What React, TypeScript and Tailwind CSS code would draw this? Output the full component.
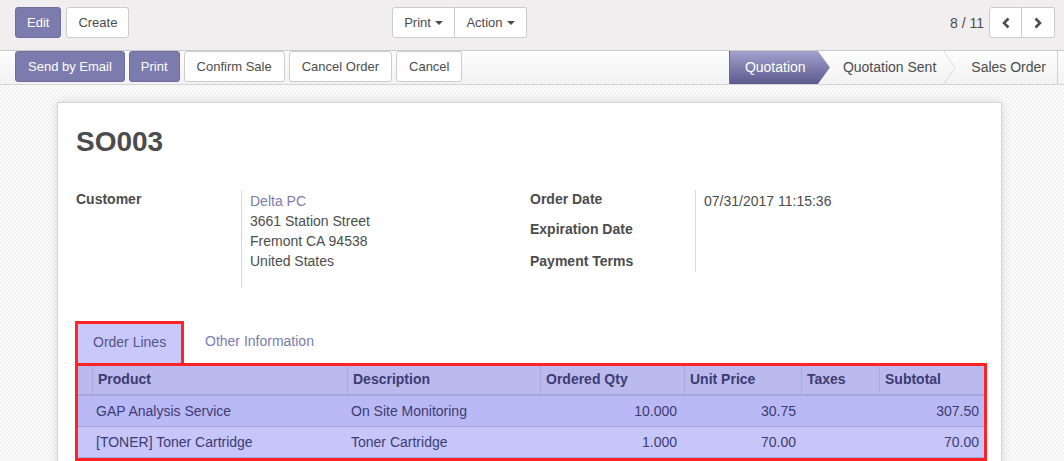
import React from "react";

const btnWhite =
  "h-[31px] px-[11px] border border-[#cccccc] bg-white rounded-[3px] text-[13px] text-[#4c4c4c] flex items-center";
const btnPrimary =
  "h-[31px] px-[11px] border border-[#6f6e9e] bg-[#7c7bad] rounded-[3px] text-[13px] text-white flex items-center";

function Caret() {
  return <span className="ml-[4px] inline-block w-0 h-0 border-l-[4px] border-r-[4px] border-t-[4px] border-l-transparent border-r-transparent border-t-[#4c4c4c]" />;
}

function ChevronL() {
  return (
    <svg width="10" height="12" viewBox="0 0 10 12">
      <path d="M7.5 1.5 L3 6 L7.5 10.5" fill="none" stroke="#4c4c4c" strokeWidth="2.6" />
    </svg>
  );
}
function ChevronR() {
  return (
    <svg width="10" height="12" viewBox="0 0 10 12">
      <path d="M2.5 1.5 L7 6 L2.5 10.5" fill="none" stroke="#4c4c4c" strokeWidth="2.6" />
    </svg>
  );
}

const rows = [
  { product: "GAP Analysis Service", desc: "On Site Monitoring", qty: "10.000", price: "30.75", taxes: "", subtotal: "307.50", bg: "bg-[#b9b9f6]" },
  { product: "[TONER] Toner Cartridge", desc: "Toner Cartridge", qty: "1.000", price: "70.00", taxes: "", subtotal: "70.00", bg: "bg-[#c6c6fb]" },
];

const cols = "grid grid-cols-[14px_255px_193px_144px_117px_78px_1fr]";

export default function App() {
  return (
    <div className="w-[1064px] h-[461px] overflow-hidden font-['Liberation_Sans',Arial,sans-serif] text-[#4c4c4c] bg-[repeating-conic-gradient(#f3f3f3_0_25%,#fbfbfb_0_50%)] bg-[length:4px_4px]">
      {/* control panel */}
      <div className="h-[51px] bg-[#f0eeee] border-b border-[#c9c9c9] flex items-start pt-[7px] pl-[15px] pr-[9px]">
        <div className="w-[512px] flex justify-between">
          <div className="flex gap-[5px]">
            <button className={btnPrimary}>Edit</button>
            <button className={btnWhite}>Create</button>
          </div>
          <div className="flex">
            <button className={btnWhite + " rounded-r-none w-[63px] justify-center"}>
              Print<Caret />
            </button>
            <button className={btnWhite + " rounded-l-none border-l-0 w-[72px] justify-center"}>
              Action<Caret />
            </button>
          </div>
        </div>
        <div className="ml-auto flex items-center">
          <span className="text-[14px] mr-[5px] mt-[1px]">8 / 11</span>
          <div className="flex">
            <button className="h-[31px] w-[33px] border border-[#cccccc] bg-white rounded-l-[3px] flex items-center justify-center">
              <ChevronL />
            </button>
            <button className="h-[31px] w-[33px] border border-l-0 border-[#cccccc] bg-white rounded-r-[3px] flex items-center justify-center">
              <ChevronR />
            </button>
          </div>
        </div>
      </div>
      {/* statusbar */}
      <div className="h-[34px] bg-[linear-gradient(#fdfdfd,#f2f2f2)] border-b border-[#d6d6d6] flex items-start pl-[15px] pr-[6px]">
        <div className="flex gap-[4px]">
          <button className={btnPrimary + " px-[12px]"}>Send by Email</button>
          <button className={btnPrimary}>Print</button>
          <button className={btnWhite + " px-[12px]"}>Confirm Sale</button>
          <button className={btnWhite + " px-[12px]"}>Cancel Order</button>
          <button className={btnWhite + " px-[12px]"}>Cancel</button>
        </div>
        <div className="ml-auto flex h-[33px] border-r border-[#d0d0d0] text-[14px]">
          <div className="relative h-full w-[101px] border-l border-[#6a6a98] bg-[linear-gradient(#a3a1cc,#5c5a8f)] text-white flex items-center pl-[15px] [clip-path:polygon(0_0,89px_0,100%_50%,89px_100%,0_100%)]">
            Quotation
          </div>
          <div className="relative h-full flex items-center pl-[13px] pr-[15px]">
            Quotation Sent
            <svg className="absolute right-[-6px] top-0" width="14" height="33" viewBox="0 0 14 33">
              <path d="M1 0 L12 16.5 L1 33" fill="none" stroke="#dcdcdc" strokeWidth="1" />
            </svg>
          </div>
          <div className="h-full flex items-center pl-[20px] pr-[11px]">Sales Order</div>
        </div>
      </div>
      {/* sheet */}
      <div className="ml-[57px] mt-[17px] w-[945px] h-[400px] bg-white border border-[#d4d4d4] shadow-[0_0_10px_rgba(0,0,0,0.12)] pl-[18px] pr-[15px] pt-[21px]">
        <h1 className="text-[28px] font-bold leading-[36px] text-[#4c4c4c]">SO003</h1>
        <div className="mt-[30px] flex text-[14px]">
          <div className="w-[454px] flex">
            <div className="w-[165px] font-bold mt-[-1px]">Customer</div>
            <div className="border-l border-[#d9d9d9] pl-[8px] pt-[1px] h-[98px] leading-[20px]">
              <div className="text-[#7c7bad]">Delta PC</div>
              <div>3661 Station Street</div>
              <div>Fremont CA 94538</div>
              <div>United States</div>
            </div>
          </div>
          <div className="flex">
            <div className="w-[165px] font-bold mt-[-1px]">
              <div className="h-[30px]">Order Date</div>
              <div className="h-[32px]">Expiration Date</div>
              <div>Payment Terms</div>
            </div>
            <div className="border-l border-[#d9d9d9] pl-[8px] pt-[1px] h-[82px] leading-[20px]">
              07/31/2017 11:15:36
            </div>
          </div>
        </div>
        {/* tabs */}
        <div className="mt-[33px] ml-[-1px] flex items-end text-[14px]">
          <div className="w-[109px] h-[42px] border-[3px] border-b-0 border-[#ff2323] bg-[#c8c8fb] text-[#555487] flex items-center pl-[15px] pb-[3px]">
            Order Lines
          </div>
          <div className="h-[42px] flex items-center pl-[21px] pb-[1px] text-[#7c7bad]">Other Information</div>
        </div>
        <div className="ml-[-1px] w-[912px] border-[3px] border-[#ff2323] text-[14px] text-[#3d3b72]">
          <div className={cols + " h-[30px] bg-[#babaee] border-b-2 border-[#a8a7dc] font-bold"}>
            <div />
            {["Product", "Description", "Ordered Qty", "Unit Price", "Taxes", "Subtotal"].map((h) => (
              <div key={h} className="border-l border-[#aaa9e0] flex items-center pl-[5px] pb-[1px]">
                {h}
              </div>
            ))}
          </div>
          {rows.map((r, i) => (
            <div key={i} className={cols + " h-[31px] border-b border-[#a9a8de] " + r.bg}>
              <div />
              <div className="flex items-center pl-[4px]">{r.product}</div>
              <div className="flex items-center pl-[4px]">{r.desc}</div>
              <div className="flex items-center justify-end pr-[7px]">{r.qty}</div>
              <div className="flex items-center justify-end pr-[5px]">{r.price}</div>
              <div className="flex items-center">{r.taxes}</div>
              <div className="flex items-center justify-end pr-[5px]">{r.subtotal}</div>
            </div>
          ))}
        </div>
      </div>
    </div>
  );
}
